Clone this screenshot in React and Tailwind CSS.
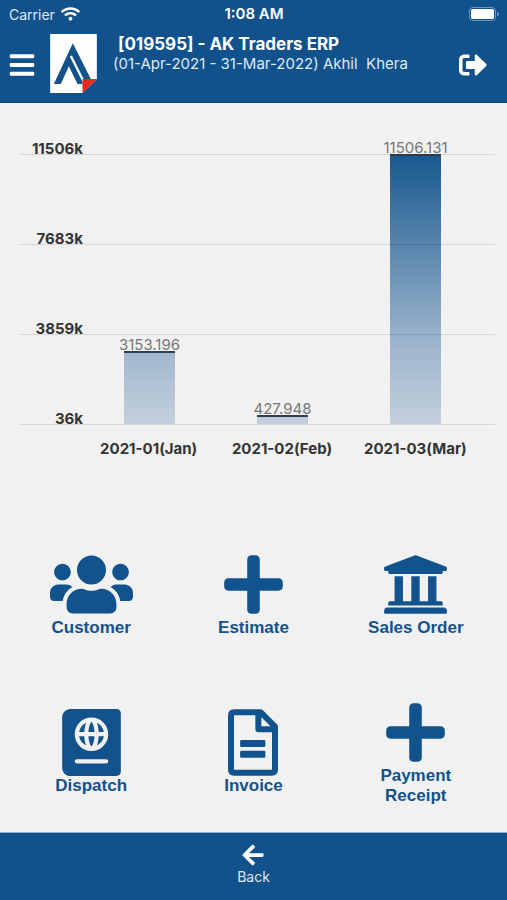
import React from "react";
import {
  FaArrowLeft,
  FaBars,
  FaPassport,
  FaPlus,
  FaSignOutAlt,
  FaUniversity,
  FaUsers,
  FaWifi,
} from "react-icons/fa";

const months = [
  { name: "2021-01(Jan)", value: 3153.196 },
  { name: "2021-02(Feb)", value: 427.948 },
  { name: "2021-03(Mar)", value: 11506.131 },
];

const ticks = ["11506k", "7683k", "3859k", "36k"];
const MIN = 36;
const MAX = 11506;

const FileIcon = ({ className }) => (
  <svg viewBox="0 0 384 512" className={className} fill="none" stroke="currentColor" aria-hidden="true">
    <path d="M48 23h202l111 111v330q0 25-25 25H48q-25 0-25-25V48q0-25 25-25z" strokeWidth="46" strokeLinejoin="round" />
    <path d="M233 30v124h122" strokeWidth="46" strokeLinejoin="round" />
    <rect x="93" y="236" width="194" height="54" rx="10" fill="currentColor" stroke="none" />
    <rect x="93" y="320" width="194" height="54" rx="10" fill="currentColor" stroke="none" />
  </svg>
);

const Logo = () => (
  <svg viewBox="0 0 140 177" className="h-[59px] w-[47px] shrink-0" role="img" aria-label="AK Traders">
    <path fill="#fff" d="M0 0h140v135l-43 42H0z" />
    <path fill="#12528d" d="M68 28 122 135H97v15H82L56 97 32 150H11z" />
    <path fill="none" stroke="#fff" strokeWidth="7" d="m62 66 38 76" />
    <path fill="#e8291c" d="M97 135h43l-43 42z" />
  </svg>
);

const Chart = () => (
  <section aria-label="Monthly sales" className="ml-5 mr-3 pt-[51px]">
    <div className="relative flex h-[270px] pr-[13px]">
      <div className="-mt-[5px] mb-[5px] flex w-[63px] shrink-0 flex-col justify-between text-[15px] font-bold text-[#333]">
        {ticks.map((tick) => (
          <div key={tick} className="flex h-0 items-center justify-end">
            {tick}
          </div>
        ))}
      </div>
      <div className="flex flex-1 items-end">
        {months.map((month) => (
          <div key={month.name} className="flex h-full flex-1 flex-col items-center justify-end">
            <span className="-mt-3 text-[15px] leading-3 text-[#777]">{month.value}</span>
            <div
              className="w-[51px] shrink-0 border-t-2 border-[#333d4b] bg-[linear-gradient(to_top,#c3cfdc,#9db5cd_30%,#17588f)] bg-[length:100%_270px] bg-bottom"
              style={{ height: `${((month.value - MIN) / (MAX - MIN)) * 100}%` }}
            />
          </div>
        ))}
      </div>
      <div className="pointer-events-none absolute inset-0 flex flex-col justify-between">
        {ticks.map((tick) => (
          <div key={tick} className="-mb-px h-px bg-black/10" />
        ))}
      </div>
    </div>
    <div className="mt-[15px] flex pl-[62px] pr-[13px] text-[15px] font-bold leading-5 text-[#333]">
      {months.map((month) => (
        <div key={month.name} className="flex flex-1 justify-center whitespace-nowrap">
          {month.name}
        </div>
      ))}
    </div>
  </section>
);

const menu = [
  { label: "Customer", Icon: FaUsers, size: "w-[83px]" },
  { label: "Estimate", Icon: FaPlus, size: "w-[67px]" },
  { label: "Sales Order", Icon: FaUniversity, size: "w-[67px]" },
  { label: "Dispatch", Icon: FaPassport, size: "w-[67px]" },
  { label: "Invoice", Icon: FileIcon, size: "w-[50px]" },
  { label: "Payment Receipt", Icon: FaPlus, size: "w-[67px]" },
];

const App = () => (
  <div className="flex min-h-screen flex-col bg-[#f1f1f1] font-['Inter','Liberation_Sans',sans-serif]">
    <header className="h-[103px] border-b border-[#0b457c] bg-[#11528d] text-white">
      <div className="grid h-7 grid-cols-3 items-center pl-[9px] pr-2 text-[14px]">
        <div className="flex items-center gap-1.5 text-[#dfe9f3]">
          Carrier
          <FaWifi className="h-4 w-[19px] text-white" aria-hidden="true" />
        </div>
        <div className="text-center text-[15px] font-semibold">1:08 AM</div>
        <div className="flex items-center justify-end gap-px">
          <div className="h-3.5 w-[27px] rounded-[4px] border border-[#6f97bd] p-px">
            <div className="h-full rounded-[2px] bg-white" />
          </div>
          <div className="h-1 w-0.5 rounded-r bg-[#6f97bd]" />
        </div>
      </div>
      <div className="flex items-start pl-[9px] pr-5 pt-1.5">
        <button type="button" aria-label="Menu" className="mt-[17px]">
          <FaBars className="h-7 w-[26px]" />
        </button>
        <div className="ml-[15px]">
          <Logo />
        </div>
        <div className="ml-4 flex-1 whitespace-nowrap">
          <h1 className="pl-[5px] text-[17px] font-bold leading-5">[019595] - AK Traders ERP</h1>
          <p className="whitespace-pre text-[15px] leading-5 text-[#dfe9f3]">
            (01-Apr-2021 - 31-Mar-2022) Akhil{"  "}Khera
          </p>
        </div>
        <button type="button" aria-label="Sign out" className="mt-[17px]">
          <FaSignOutAlt className="h-7 w-7" />
        </button>
      </div>
    </header>

    <main className="flex flex-1 flex-col">
      <Chart />
      <nav className="mt-14 grid flex-1 auto-rows-fr grid-cols-3 px-2.5 font-['Liberation_Sans',Arial,sans-serif] text-[#12528d]">
        {menu.map(({ label, Icon, size }) => (
          <button key={label} type="button" className="flex flex-col items-center justify-center">
            <Icon className={`h-[67px] ${size}`} />
            <span className="max-w-28 text-[17px] font-bold leading-5">{label}</span>
          </button>
        ))}
      </nav>
    </main>

    <footer className="flex h-[68px] justify-center border-t border-[#8fb0cf] bg-[#11528d]">
      <button type="button" className="flex flex-col items-center pt-2.5 text-[14px] leading-5 text-[#dfe9f3]">
        <FaArrowLeft className="h-6 w-6 text-white" />
        Back
      </button>
    </footer>
  </div>
);

export default App;
